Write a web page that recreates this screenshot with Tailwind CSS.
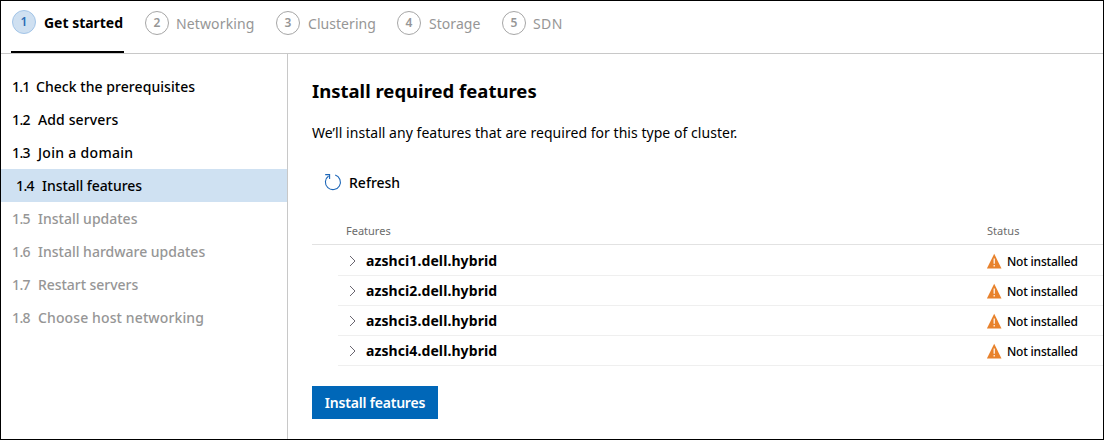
<!DOCTYPE html>
<html lang="en">
<head>
<meta charset="utf-8">
<title>Install required features</title>
<script src="https://cdn.jsdelivr.net/npm/@tailwindcss/browser@4"></script>
</head>
<body class="font-['Noto_Sans',sans-serif] text-[14px] text-black bg-white">
<svg class="hidden">
  <symbol id="warn" viewBox="0 0 16 16"><path d="M7.2 .8 14.5 15.6H-.2z" fill="#e8822c"/><path d="M7.2 5.4v5.4M7.2 12v1.6" stroke="#fff" stroke-width="1.2"/></symbol>
  <symbol id="chev" viewBox="0 0 8 12"><path d="M1 1l5 5-5 5" fill="none" stroke="#6a6670" stroke-width="1"/></symbol>
</svg>
<div class="w-[1104px] h-[440px] border border-black flex flex-col overflow-hidden whitespace-nowrap">
  <header class="h-[53px] shrink-0 border-b border-[#c8c8c8] flex text-[#969696]">
    <div class="ml-[10px] w-[113px] h-[52px] border-b-2 border-black flex items-start pl-px pt-[9px] text-black">
      <span class="size-6 rounded-full bg-[#cfe0f1] border border-[#a3c5e8] flex items-center justify-center text-[12px] leading-none font-semibold text-[#2b6cb5]">1</span>
      <span class="ml-2 pt-px leading-6 font-bold tracking-[-0.02px]">Get started</span>
    </div>
    <div class="flex items-start ml-[21px] pt-[10px] w-[131px]">
      <span class="size-6 rounded-full border border-[#a6a6a6] flex items-center justify-center text-[12px] leading-none font-semibold">2</span>
      <span class="ml-[7px] pt-px leading-6 tracking-[0.13px]">Networking</span>
    </div>
    <div class="flex items-start pt-[10px] w-[121px]">
      <span class="size-6 rounded-full border border-[#a6a6a6] flex items-center justify-center text-[12px] leading-none font-semibold">3</span>
      <span class="ml-2 pt-px leading-6 tracking-[0.05px]">Clustering</span>
    </div>
    <div class="flex items-start pt-[10px] w-[105px]">
      <span class="size-6 rounded-full border border-[#a6a6a6] flex items-center justify-center text-[12px] leading-none font-semibold">4</span>
      <span class="ml-2 pt-px leading-6 tracking-[0.05px]">Storage</span>
    </div>
    <div class="flex items-start pt-[10px]">
      <span class="size-6 rounded-full border border-[#a6a6a6] flex items-center justify-center text-[12px] leading-none font-semibold">5</span>
      <span class="ml-[7px] pt-px leading-6 tracking-[0.4px]">SDN</span>
    </div>
  </header>
  <div class="flex flex-1">
    <nav class="w-[287px] shrink-0 border-r border-[#c8c8c8] pt-4 font-medium leading-[33px] text-[#969696]">
      <div class="flex h-[33px] pl-[11px] text-black"><span class="w-[24px] tracking-[-0.8px]">1.1</span><span class="tracking-[0.05px]">Check the prerequisites</span></div>
      <div class="flex h-[33px] pl-[11px] text-black"><span class="w-[26px] tracking-[-0.6px]">1.2</span><span class="tracking-[0.13px]">Add servers</span></div>
      <div class="flex h-[33px] pl-[11px] text-black"><span class="w-[26px] tracking-[-0.6px]">1.3</span><span class="tracking-[0.3px]">Join a domain</span></div>
      <div class="flex h-[33px] pl-[15px] text-black bg-[#cfe1f2]"><span class="w-[26px] tracking-[-0.6px]">1.4</span><span class="tracking-[-0.05px]">Install features</span></div>
      <div class="flex h-[33px] pl-[11px]"><span class="w-[26px] tracking-[-0.6px]">1.5</span><span>Install updates</span></div>
      <div class="flex h-[33px] pl-[11px]"><span class="w-[26px] tracking-[-0.6px]">1.6</span><span>Install hardware updates</span></div>
      <div class="flex h-[33px] pl-[11px]"><span class="w-[26px] tracking-[-0.6px]">1.7</span><span class="tracking-[-0.05px]">Restart servers</span></div>
      <div class="flex h-[33px] pl-[11px]"><span class="w-[26px] tracking-[-0.6px]">1.8</span><span class="tracking-[0.12px]">Choose host networking</span></div>
    </nav>
    <main class="flex-1 pl-6">
      <h1 class="mt-[21px] h-8 leading-8 text-[18.5px] font-bold">Install required features</h1>
      <p class="mt-[14px] h-6 leading-6 tracking-[0.04px]">We’ll install any features that are required for this type of cluster.</p>
      <div class="mt-[25px] h-6 flex items-center pl-3 font-medium">
        <svg class="size-[18px]" viewBox="0 0 18 18" fill="none" stroke="#1c66b8" stroke-width="1.1"><path d="M11.2 2A7.5 7.5 0 1 1 4.6 3"/><path d="M1.2 1.6h4.4v4.4"/></svg>
        <span class="ml-[7px]">Refresh</span>
      </div>
      <div class="mt-[25px] h-[26px] flex border-b border-[#e2e2e2] text-[11px] leading-6 text-[#6b6b6b]">
        <span class="pl-[34px] w-[675px]">Features</span><span class="tracking-[0.05px]">Status</span>
      </div>
      <div class="ml-[26px]">
        <div class="h-[31px] pt-px border-b border-[#efefef] flex items-center"><svg class="ml-[11px] w-2 h-3"><use href="#chev"/></svg><span class="ml-[9px] w-[621px] font-bold tracking-[0.09px]">azshci1.dell.hybrid</span><svg class="size-4"><use href="#warn"/></svg><span class="ml-1 mt-[2px] text-xs font-medium tracking-[-0.2px]">Not installed</span></div>
        <div class="h-[30px] border-b border-[#efefef] flex items-center"><svg class="ml-[11px] w-2 h-3"><use href="#chev"/></svg><span class="ml-[9px] w-[621px] font-bold tracking-[0.09px]">azshci2.dell.hybrid</span><svg class="size-4"><use href="#warn"/></svg><span class="ml-1 mt-[2px] text-xs font-medium tracking-[-0.2px]">Not installed</span></div>
        <div class="h-[30px] border-b border-[#efefef] flex items-center"><svg class="ml-[11px] w-2 h-3"><use href="#chev"/></svg><span class="ml-[9px] w-[621px] font-bold tracking-[0.09px]">azshci3.dell.hybrid</span><svg class="size-4"><use href="#warn"/></svg><span class="ml-1 mt-[2px] text-xs font-medium tracking-[-0.2px]">Not installed</span></div>
        <div class="h-[30px] border-b border-[#efefef] flex items-center"><svg class="ml-[11px] w-2 h-3"><use href="#chev"/></svg><span class="ml-[9px] w-[621px] font-bold tracking-[0.09px]">azshci4.dell.hybrid</span><svg class="size-4"><use href="#warn"/></svg><span class="ml-1 mt-[2px] text-xs font-medium tracking-[-0.2px]">Not installed</span></div>
      </div>
      <button class="mt-5 block w-[126px] h-[33px] bg-[#0067b8] text-white font-semibold tracking-[-0.2px] leading-[33px] text-center">Install features</button>
    </main>
  </div>
</div>
</body>
</html>
